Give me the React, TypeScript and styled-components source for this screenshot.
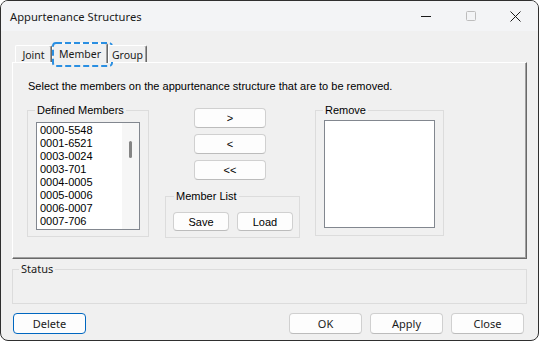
import React from 'react';
import styled, { createGlobalStyle } from 'styled-components';

const members = [
  '0000-5548',
  '0001-6521',
  '0003-0024',
  '0003-701',
  '0004-0005',
  '0005-0006',
  '0006-0007',
  '0007-706',
];

const GlobalStyle = createGlobalStyle`
  html, body {
    margin: 0;
    padding: 0;
    background: #ffffff;
  }
  * {
    box-sizing: border-box;
  }
`;

const uiFont = `"Noto Sans", "Open Sans", sans-serif`;
const classicFont = `"Liberation Sans", Arial, sans-serif`;

const Window = styled.div`
  width: 539px;
  height: 341px;
  border: 1px solid #2f2f2f;
  border-radius: 8px;
  overflow: hidden;
  background: #f0f0f0;
  display: flex;
  flex-direction: column;
`;

const TitleBar = styled.div`
  height: 30px;
  flex: none;
  display: flex;
  align-items: center;
  padding-left: 9px;
  background: #f3f4f6;
`;

const Title = styled.div`
  flex: 1;
  font-family: ${uiFont};
  font-size: 11.2px;
  color: #1a1a1a;
`;

const CaptionButton = styled.div`
  width: 45px;
  height: 30px;
  display: flex;
  align-items: center;
  justify-content: center;
`;

const Body = styled.div`
  flex: 1;
  display: flex;
  flex-direction: column;
  padding: 0 11px;
`;

const TabStrip = styled.div`
  margin-top: 12px;
  height: 19px;
  display: flex;
  align-items: flex-end;
  padding-left: 3px;
  position: relative;
  z-index: 1;
`;

const Tab = styled.div<{ $w: number; $active?: boolean }>`
  position: relative;
  width: ${(p) => p.$w}px;
  height: ${(p) => (p.$active ? 20 : 17)}px;
  margin-bottom: ${(p) => (p.$active ? -1 : 0)}px;
  display: flex;
  align-items: center;
  justify-content: center;
  padding-top: ${(p) => (p.$active ? 0 : 1)}px;
  background: #f0f0f0;
  border-top: 1px solid #ffffff;
  border-left: 1px solid #ffffff;
  border-right: 1px solid #696969;
  box-shadow: inset -1px 0 0 #a0a0a0;
  border-radius: 2px 2px 0 0;
  font-family: ${uiFont};
  font-size: 10.5px;
  color: #1a1a1a;
`;

const FocusRing = styled.svg`
  position: absolute;
  left: -1px;
  top: -2px;
`;

const Panel = styled.div`
  height: 197px;
  border-top: 1px solid #ffffff;
  border-left: 1px solid #ffffff;
  border-right: 1px solid #696969;
  border-bottom: 1px solid #696969;
  box-shadow: inset -1px -1px 0 #a0a0a0;
  padding: 17px 15px 0 15px;
  font-family: ${classicFont};
  font-size: 11px;
  line-height: 13px;
  color: #000;
`;

const Instructions = styled.div`
  height: 13px;
`;

const Row = styled.div`
  margin-top: 17px;
  margin-left: -1px;
  display: flex;
  align-items: flex-start;
`;

const GroupBox = styled.div<{ $w: number; $h: number; $pad: string }>`
  position: relative;
  flex: none;
  width: ${(p) => p.$w}px;
  height: ${(p) => p.$h}px;
  border: 1px solid #dcdcdc;
  padding: ${(p) => p.$pad};
`;

const Caption = styled.span<{ $left: number; $ui?: boolean }>`
  position: absolute;
  left: ${(p) => p.$left}px;
  top: ${(p) => (p.$ui ? -9 : -7)}px;
  padding: 0 2px;
  background: #f0f0f0;
  font-family: ${(p) => (p.$ui ? uiFont : classicFont)};
  font-size: ${(p) => (p.$ui ? 11 : 11)}px;
  line-height: ${(p) => (p.$ui ? 16 : 13)}px;
  color: ${(p) => (p.$ui ? '#1a1a1a' : '#000')};
`;

const ListBox = styled.div<{ $w: number }>`
  width: ${(p) => p.$w}px;
  height: 108px;
  border: 1px solid #82878f;
  background: #ffffff;
  display: flex;
`;

const Items = styled.div`
  flex: 1;
  padding: 1px 0 0 3px;
  overflow: hidden;
`;

const Item = styled.div`
  height: 13px;
  line-height: 13px;
  white-space: nowrap;
`;

const ScrollTrack = styled.div`
  width: 17px;
  background: #f6f6f6;
  position: relative;
`;

const ScrollThumb = styled.div`
  position: absolute;
  left: 7px;
  top: 18px;
  width: 3px;
  height: 17px;
  border-radius: 2px;
  background: #858585;
`;

const Middle = styled.div`
  flex: none;
  width: 135px;
  margin: -2px 0 0 16px;
  display: flex;
  flex-direction: column;
`;

const ArrowStack = styled.div`
  display: flex;
  flex-direction: column;
  gap: 6px;
  padding-left: 29px;
  margin-bottom: 16px;
`;

const ButtonRow = styled.div`
  display: flex;
  gap: 8px;
`;

const Button = styled.button<{ $w: number; $h: number; $ui?: boolean; $primary?: boolean }>`
  width: ${(p) => p.$w}px;
  height: ${(p) => p.$h}px;
  margin: 0;
  padding: 0;
  background: #fdfdfd;
  border: 1px solid ${(p) => (p.$primary ? '#0067c0' : '#d0d0d0')};
  border-bottom-color: ${(p) => (p.$primary ? '#0067c0' : '#bcbcbc')};
  border-radius: 4px;
  font-family: ${(p) => (p.$ui ? uiFont : classicFont)};
  font-size: 11px;
  color: ${(p) => (p.$ui ? '#1a1a1a' : '#000')};
  display: flex;
  align-items: center;
  justify-content: center;
`;

const Status = styled.div`
  margin-top: 10px;
  height: 35px;
  border: 1px solid #dcdcdc;
  position: relative;
`;

const Footer = styled.div`
  margin-top: 9px;
  display: flex;
  padding: 0 3px 0 1px;
  gap: 8px;
`;

const Spacer = styled.div`
  flex: 1;
`;

export default function App() {
  return (
    <>
      <GlobalStyle />
      <Window>
        <TitleBar>
          <Title>Appurtenance Structures</Title>
          <CaptionButton>
            <svg width="10" height="10" viewBox="0 0 10 10">
              <path d="M0 5.5h10" stroke="#1a1a1a" strokeWidth="1" />
            </svg>
          </CaptionButton>
          <CaptionButton>
            <svg width="10" height="10" viewBox="0 0 10 10">
              <rect x="0.5" y="0.5" width="9" height="9" rx="1" fill="none" stroke="#bdbdbd" />
            </svg>
          </CaptionButton>
          <CaptionButton>
            <svg width="11" height="11" viewBox="0 0 11 11">
              <path d="M0.5 0.5l10 10M10.5 0.5l-10 10" stroke="#1a1a1a" strokeWidth="1" />
            </svg>
          </CaptionButton>
        </TitleBar>
        <Body>
          <TabStrip>
            <Tab $w={37}>Joint</Tab>
            <Tab $w={56} $active>
              Member
              <FocusRing width="61" height="25" viewBox="0 0 61 25">
                <rect
                  x="1"
                  y="1"
                  width="59"
                  height="23"
                  rx="3"
                  fill="none"
                  stroke="#2a8fe2"
                  strokeWidth="2"
                  strokeDasharray="6 3"
                />
              </FocusRing>
            </Tab>
            <Tab $w={39}>Group</Tab>
          </TabStrip>
          <Panel>
            <Instructions>
              Select the members on the appurtenance structure that are to be removed.
            </Instructions>
            <Row>
              <GroupBox $w={122} $h={127} $pad="11px 0 0 8px">
                <Caption $left={7}>Defined Members</Caption>
                <ListBox $w={104}>
                  <Items>
                    {members.map((m) => (
                      <Item key={m}>{m}</Item>
                    ))}
                  </Items>
                  <ScrollTrack>
                    <ScrollThumb />
                  </ScrollTrack>
                </ListBox>
              </GroupBox>
              <Middle>
                <ArrowStack>
                  <Button $w={72} $h={20}>&gt;</Button>
                  <Button $w={72} $h={20}>&lt;</Button>
                  <Button $w={72} $h={20}>&lt;&lt;</Button>
                </ArrowStack>
                <GroupBox $w={135} $h={42} $pad="15px 0 0 7px">
                  <Caption $left={8}>Member List</Caption>
                  <ButtonRow>
                    <Button $w={56} $h={19}>Save</Button>
                    <Button $w={56} $h={19}>Load</Button>
                  </ButtonRow>
                </GroupBox>
              </Middle>
              <GroupBox $w={129} $h={126} $pad="9px 0 0 8px" style={{ marginLeft: 15 }}>
                <Caption $left={7}>Remove</Caption>
                <ListBox $w={111} />
              </GroupBox>
            </Row>
          </Panel>
          <Status>
            <Caption $left={6} $ui>
              Status
            </Caption>
          </Status>
          <Footer>
            <Button $w={73} $h={21} $ui $primary>
              Delete
            </Button>
            <Spacer />
            <Button $w={73} $h={21} $ui>
              OK
            </Button>
            <Button $w={73} $h={21} $ui>
              Apply
            </Button>
            <Button $w={73} $h={21} $ui>
              Close
            </Button>
          </Footer>
        </Body>
      </Window>
    </>
  );
}
